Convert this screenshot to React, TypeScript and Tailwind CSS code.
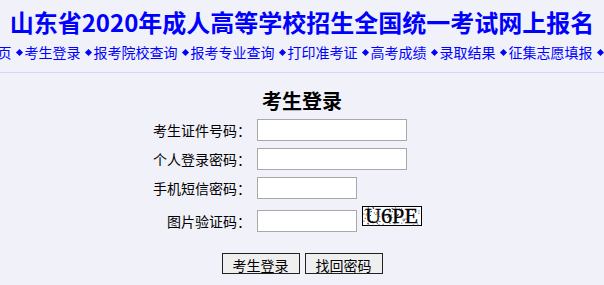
import React from "react";

const navItems = [
  "首页",
  "考生登录",
  "报考院校查询",
  "报考专业查询",
  "打印准考证",
  "高考成绩",
  "录取结果",
  "征集志愿填报",
  "退出",
];

const fields = [
  { label: "考生证件号码：", width: "w-[150px]" },
  { label: "个人登录密码：", width: "w-[150px]" },
  { label: "手机短信密码：", width: "w-[100px]" },
];

// deterministic speckle for the captcha picture
function noiseDots() {
  let seed = 7;
  const rand = () => {
    seed = (seed * 9301 + 49297) % 233280;
    return seed / 233280;
  };
  return Array.from({ length: 80 }, (_, i) => ({
    key: i,
    x: 1 + rand() * 58,
    y: 1 + rand() * 18,
  }));
}

function Captcha() {
  const dots = noiseDots();
  return (
    <svg width="60" height="20" viewBox="0 0 60 20" className="block">
      <rect x="0.5" y="0.5" width="59" height="19" fill="#ffffff" stroke="#000000" />
      {dots.map((d) => (
        <rect key={d.key} x={d.x} y={d.y} width="1" height="1" fill="#333333" />
      ))}
      <text
        x="3"
        y="16.5"
        textLength="53"
        lengthAdjust="spacingAndGlyphs"
        fontFamily="'Liberation Serif', serif"
        fontSize="20"
        fill="#000000"
        stroke="#000000"
        strokeWidth="0.3"
      >
        U6PE
      </text>
    </svg>
  );
}

export default function App() {
  return (
    <div className="min-h-screen w-full bg-[#f1f2f9] text-black font-['Noto_Sans_CJK_SC',sans-serif] overflow-hidden">
      {/* Header */}
      <div className="pt-[5px] text-center text-[24px] leading-[34px] font-bold text-[#0000ff] whitespace-nowrap">
        山东省2020年成人高等学校招生全国统一考试网上报名
      </div>

      {/* Nav */}
      <div className="mt-[3px] pb-[10px] border-b border-[#d6d6f5] overflow-hidden">
        <div className="flex justify-center whitespace-nowrap text-[14px] leading-[20px] text-[#0000ff]">
          {navItems.map((item) => (
            <span key={item} className="flex items-center shrink-0">
              <span className="ml-[5px] mr-[3px] w-[5px] h-[5px] rotate-45 bg-[#0000ff] inline-block" />
              <span>{item}</span>
            </span>
          ))}
        </div>
      </div>

      {/* Login form */}
      <div className="mt-[14px] text-center text-[20px] leading-[28px] font-bold">考生登录</div>

      <div className="mt-[4px] flex flex-col gap-[7px] text-[14px]">
        {fields.map((f) => (
          <div key={f.label} className="flex items-center">
            <div className="w-[251px] shrink-0 text-right leading-[22px]">{f.label}</div>
            <input
              type="text"
              className={`ml-[6px] h-[22px] ${f.width} bg-white border border-[#a9a9a9] outline-none`}
            />
          </div>
        ))}
        <div className="flex items-start">
          <div className="mt-[4px] w-[251px] shrink-0 text-right leading-[22px]">图片验证码：</div>
          <input
            type="text"
            className="mt-[4px] ml-[6px] h-[22px] w-[100px] bg-white border border-[#a9a9a9] outline-none"
          />
          <div className="ml-[5px]">
            <Captcha />
          </div>
        </div>
      </div>

      <div className="mt-[21px] flex justify-center gap-[5px] text-[14px]">
        <button className="h-[21px] px-[10px] pt-[3px] border border-[#222] bg-[#efefef] leading-[17px] overflow-hidden">
          考生登录
        </button>
        <button className="h-[21px] px-[10px] pt-[3px] border border-[#222] bg-[#efefef] leading-[17px] overflow-hidden">
          找回密码
        </button>
      </div>
    </div>
  );
}
